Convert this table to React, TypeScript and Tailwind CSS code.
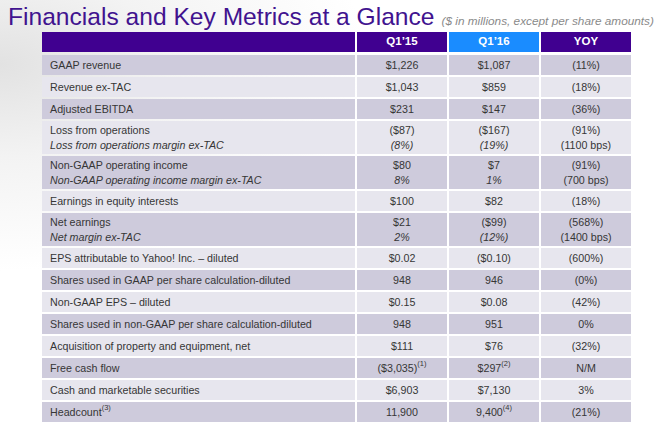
import React from "react";

type Row = {
  label: string;
  sub?: string;
  sup?: string;
  a: React.ReactNode;
  b: React.ReactNode;
  c: React.ReactNode;
  a2?: string;
  b2?: string;
  c2?: string;
  a2i?: boolean;
  b2i?: boolean;
};

const Sup = ({ t }: { t: string }) => (
  <sup className="text-[7.5px] relative top-[-1px] align-super leading-none">{t}</sup>
);

const rows: Row[] = [
  { label: "GAAP revenue", a: "$1,226", b: "$1,087", c: "(11%)" },
  { label: "Revenue ex-TAC", a: "$1,043", b: "$859", c: "(18%)" },
  { label: "Adjusted EBITDA", a: "$231", b: "$147", c: "(36%)" },
  {
    label: "Loss from operations",
    sub: "Loss from operations margin ex-TAC",
    a: "($87)",
    b: "($167)",
    c: "(91%)",
    a2: "(8%)",
    b2: "(19%)",
    c2: "(1100 bps)",
    a2i: true,
    b2i: true,
  },
  {
    label: "Non-GAAP operating income",
    sub: "Non-GAAP operating income margin ex-TAC",
    a: "$80",
    b: "$7",
    c: "(91%)",
    a2: "8%",
    b2: "1%",
    c2: "(700 bps)",
    a2i: true,
    b2i: true,
  },
  { label: "Earnings in equity interests", a: "$100", b: "$82", c: "(18%)" },
  {
    label: "Net earnings",
    sub: "Net margin ex-TAC",
    a: "$21",
    b: "($99)",
    c: "(568%)",
    a2: "2%",
    b2: "(12%)",
    c2: "(1400 bps)",
    a2i: true,
    b2i: true,
  },
  { label: "EPS attributable to Yahoo! Inc. \u2013 diluted", a: "$0.02", b: "($0.10)", c: "(600%)" },
  { label: "Shares used in GAAP per share calculation-diluted", a: "948", b: "946", c: "(0%)" },
  { label: "Non-GAAP EPS \u2013 diluted", a: "$0.15", b: "$0.08", c: "(42%)" },
  { label: "Shares used in non-GAAP per share calculation-diluted", a: "948", b: "951", c: "0%" },
  { label: "Acquisition of property and equipment, net", a: "$111", b: "$76", c: "(32%)" },
  {
    label: "Free cash flow",
    a: (
      <>
        ($3,035)
        <Sup t="(1)" />
      </>
    ),
    b: (
      <>
        $297
        <Sup t="(2)" />
      </>
    ),
    c: "N/M",
  },
  { label: "Cash and marketable securities", a: "$6,903", b: "$7,130", c: "3%" },
  {
    label: "Headcount",
    sup: "(3)",
    a: "11,900",
    b: (
      <>
        9,400
        <Sup t="(4)" />
      </>
    ),
    c: "(21%)",
  },
];

export default function App() {
  return (
    <div
      className="w-[655px] h-[429px] overflow-hidden relative bg-[radial-gradient(ellipse_at_0%_15%,#e2e2e2_0%,#f3f3f3_18%,#ffffff_40%)] text-[#363636]"
      style={{ fontFamily: "'Liberation Sans', Arial, sans-serif" }}
    >
      <div className="flex items-baseline pl-[8px] pt-[3px] h-[32px] whitespace-nowrap">
        <span className="shrink-0 whitespace-nowrap text-[24.6px] leading-[28px] text-[#41138f]">
          Financials and Key Metrics at a Glance
        </span>
        <span className="shrink-0 whitespace-nowrap ml-[7px] text-[11.8px] italic text-[#8a8a8a]">
          ($ in millions, except per share amounts)
        </span>
      </div>

      <div className="ml-[42px] w-[589px] flex flex-col">
        <div className="grid grid-cols-[313px_90px_90px_90px] gap-x-[2px] h-[20px] mb-[3px] text-white font-bold text-[11.5px]">
          <div className="bg-[#400090]" />
          <div className="bg-[#400090] flex items-center justify-center">Q1’15</div>
          <div className="bg-[#1a8cff] flex items-center justify-center">Q1’16</div>
          <div className="bg-[#400090] flex items-center justify-center">YOY</div>
        </div>
        <div className="flex flex-col gap-y-[2px] text-[10.7px] leading-[15px]">
          {rows.map((r, i) => {
            const bg = i % 2 === 0 ? "bg-[#cecbdc]" : "bg-[#e7e6ee]";
            const dbl = !!r.sub;
            const h = dbl ? "h-[33px]" : "h-[20px]";
            return (
              <div key={i} className={`grid grid-cols-[313px_90px_90px_90px] gap-x-[2px] ${h}`}>
                <div className={`${bg} flex flex-col justify-center pl-[8px] whitespace-nowrap`}>
                  <div>
                    {r.label}
                    {r.sup && <Sup t={r.sup} />}
                  </div>
                  {r.sub && <div className="italic">{r.sub}</div>}
                </div>
                <div className={`${bg} flex flex-col justify-center items-center whitespace-nowrap`}>
                  <div>{r.a}</div>
                  {r.a2 && <div className={r.a2i ? "italic" : ""}>{r.a2}</div>}
                </div>
                <div className={`${bg} flex flex-col justify-center items-center whitespace-nowrap`}>
                  <div>{r.b}</div>
                  {r.b2 && <div className={r.b2i ? "italic" : ""}>{r.b2}</div>}
                </div>
                <div className={`${bg} flex flex-col justify-center items-center whitespace-nowrap`}>
                  <div>{r.c}</div>
                  {r.c2 && <div>{r.c2}</div>}
                </div>
              </div>
            );
          })}
        </div>
      </div>
    </div>
  );
}
